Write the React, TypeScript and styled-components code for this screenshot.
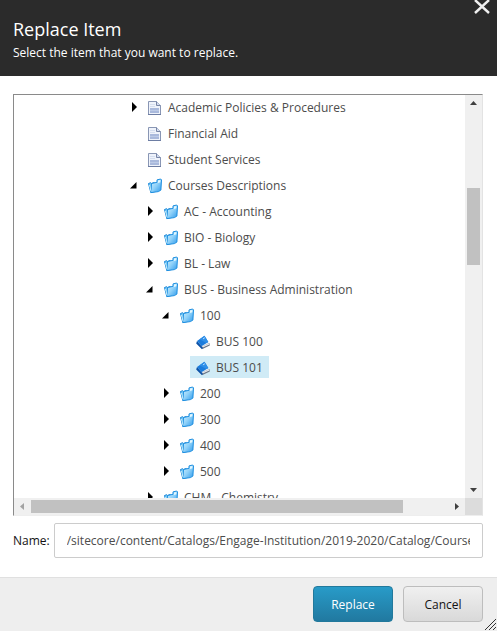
import React, { useState } from "react";
import styled, { createGlobalStyle } from "styled-components";

const GlobalStyle = createGlobalStyle`
  * { box-sizing: border-box; }
  body {
    margin: 0;
    background: #fff;
    font-family: "Open Sans", "Noto Sans", sans-serif;
    font-size: 12px;
    color: #131313;
  }
`;

const Dialog = styled.form`
  display: flex;
  flex-direction: column;
  height: 100vh;
  overflow: hidden;
`;

const Header = styled.header`
  display: flex;
  justify-content: space-between;
  align-items: flex-start;
  flex: none;
  height: 76px;
  padding: 0 7px 0 13px;
  background: #2b2b2b;
  color: #fff;
`;

const Title = styled.h1`
  margin: 16px 0 0;
  font-size: 18px;
  line-height: 26px;
  font-weight: 400;
`;

const Subtitle = styled.p`
  margin: 0;
  line-height: 22px;
`;

const CloseButton = styled.button`
  display: flex;
  padding: 0;
  border: 0;
  background: none;
  color: #f0f0f0;
  cursor: pointer;
`;

const Body = styled.main`
  display: flex;
  flex-direction: column;
  flex: 1;
  min-height: 0;
  padding: 18px 14px 19px 13px;
  gap: 7px;
`;

const TreeFrame = styled.div`
  display: grid;
  grid-template-columns: minmax(0, 1fr) 17px;
  grid-template-rows: minmax(0, 1fr) 17px;
  flex: 1;
  min-height: 0;
  border: 1px solid;
  border-color: #8a8a8a #e3e3e3 #eeeeee #8a8a8a;
`;

const TreeView = styled.ul`
  margin: 0;
  padding: 0;
  list-style: none;
  overflow: hidden;
`;

const TreeRow = styled.li<{ $level: number }>`
  display: flex;
  align-items: center;
  height: 26px;
  padding: 0 0 2px ${(p) => 115 + p.$level * 16}px;
`;

const Expander = styled.button`
  display: flex;
  flex: none;
  width: 13px;
  padding: 0 0 0 1px;
  border: 0;
  background: none;
`;

const Node = styled.button<{ $selected: boolean }>`
  display: flex;
  align-items: center;
  gap: 6px;
  height: 22px;
  padding: 1px 6px 0;
  border: 0;
  background: ${(p) => (p.$selected ? "#d0ebf6" : "transparent")};
  color: #4c4c4c;
  font: inherit;
  line-height: 22px;
  white-space: nowrap;
`;

const ScrollBar = styled.div<{ $vertical?: boolean }>`
  display: flex;
  flex-direction: ${(p) => (p.$vertical ? "column" : "row")};
  background: #f0f0f0;
`;

const ScrollArrow = styled.button`
  display: flex;
  align-items: center;
  justify-content: center;
  flex: none;
  width: 17px;
  height: 17px;
  padding: 0;
  border: 0;
  background: none;
`;

const Track = styled.div<{ $share: number }>`
  flex: ${(p) => p.$share} 1 0;
`;

const Thumb = styled(Track)<{ $vertical?: boolean }>`
  margin: ${(p) => (p.$vertical ? "0 2px" : "2px 0")};
  background: #c1c1c1;
`;

const Corner = styled.div`
  background: #dcdcdc;
`;

const Field = styled.div`
  display: flex;
  align-items: center;
  gap: 4px;
`;

const Label = styled.label`
  flex: none;
`;

const TextInput = styled.input`
  flex: 1;
  min-width: 0;
  height: 35px;
  padding: 0 12px;
  border: 1px solid #ccc;
  border-radius: 2px;
  background: #fff;
  color: #4c4c4c;
  font: inherit;
  outline: none;
`;

const Footer = styled.footer`
  position: relative;
  display: flex;
  justify-content: flex-end;
  gap: 10px;
  flex: none;
  padding: 8px 14px 9px;
  border-top: 1px solid #e0e0e0;
  background: #eee;
`;

const ActionButton = styled.button<{ $primary?: boolean }>`
  width: 80px;
  height: 36px;
  padding: 0;
  border: 1px solid ${(p) => (p.$primary ? "#22799c" : "#bdbdbd")};
  border-radius: 4px;
  background: ${(p) =>
    p.$primary
      ? "linear-gradient(#289bc8, #2179a0)"
      : "linear-gradient(#f0f0f0, #d9d9d9)"};
  color: ${(p) => (p.$primary ? "#fff" : "#131313")};
  font: inherit;
`;

const Grip = styled.svg`
  position: absolute;
  right: 1px;
  bottom: 0;
`;

type Kind = "page" | "folder" | "book";
type State = "open" | "closed" | "leaf";

function KindIcon({ kind }: { kind: Kind }) {
  if (kind === "page") {
    return (
      <svg width="14" height="16" viewBox="0 0 14 16" aria-hidden="true">
        <path d="M.5 1.500h8l4 4v9H.5z" fill="#eff3fb" stroke="#8996b4" />
        <path d="M8.500 1.500v4h4" fill="#d3dcee" stroke="#7785a6" />
        <path d="M2 8h9v5H2z" fill="#a9b9dc" />
        <path d="M2 4.500h5M2 6.500h5" stroke="#d5deef" />
        <path d="M2 10.500h9" stroke="#bccae6" />
        <path d="M0 14.500h13" stroke="#6d7da3" />
      </svg>
    );
  }
  if (kind === "folder") {
    return (
      <svg width="14" height="16" viewBox="0 0 14 16" aria-hidden="true">
        <defs>
          <linearGradient id="folder" x1="0" y1="0" x2="1" y2="1">
            <stop offset="0" stopColor="#d8f4ff" />
            <stop offset=".5" stopColor="#8dd0f9" />
            <stop offset="1" stopColor="#2b98ea" />
          </linearGradient>
        </defs>
        <path d="M.5 5.500l2.200-.8.600.8 3-1 1 9-4.500 1z" fill="#7ccdf8" stroke="#1685d8" />
        <path d="M3.500 5.500l5.500-1.200V1.900l3.700-.9.800.9-.6 10.200-2.500 1.500-7.500 1z" fill="url(#folder)" stroke="#1e8fe0" />
        <path d="M10 2.600l2.400-.5v2.200l-2.400.6z" fill="#e2f7ff" />
        <path d="M1.500 7l1.600 6.500" stroke="#c8effe" />
      </svg>
    );
  }
  return (
    <svg width="14" height="16" viewBox="0 0 14 16" aria-hidden="true">
      <path d="M2 10.500l4.500 4.500 7.300-3.400-.5-2.600z" fill="#6b7686" />
      <path d="M2.500 10l4.200 3.600 6.500-3.200-.8-1.700z" fill="#f2f4f7" />
      <path d="M4.800 13.200l7.800-3.700" stroke="#aab2be" strokeWidth=".6" />
      <path d="M1 7l7.500-5.200L12.300 8 5.500 12.300z" fill="#1c7cdc" />
      <path d="M3.500 5.300l5-3.500L12.300 8l-1.700 1z" fill="#2f8fe8" />
      <path d="M1 7L.2 9.500 6 15.200l.8-1.500-1.300-1.400z" fill="#0c52a8" />
      <path d="M7 4.900l1.900-1.200" stroke="#b4dcff" />
    </svg>
  );
}

function ExpanderIcon({ open }: { open: boolean }) {
  return (
    <svg width="9" height="10" viewBox="0 0 9 10" aria-hidden="true">
      <path d={open ? "M6.500 2v6.500H0z" : "M2 0l5 5-5 5z"} fill="#000" />
    </svg>
  );
}

const arrowPaths = {
  up: "M1 6l3.500-4L8 6z",
  down: "M1 3l3.500 4L8 3z",
  left: "M6 1L2 4.500 6 8z",
  right: "M3 1l4 3.500L3 8z",
};

function Arrow({ dir, faded }: { dir: keyof typeof arrowPaths; faded?: boolean }) {
  return (
    <ScrollArrow type="button" aria-label={`Scroll ${dir}`}>
      <svg width="9" height="9" viewBox="0 0 9 9" aria-hidden="true">
        <path d={arrowPaths[dir]} fill={faded ? "#a3a3a3" : "#404040"} />
      </svg>
    </ScrollArrow>
  );
}

const items: { text: string; level: number; kind: Kind; state: State }[] = [
  { text: "Academic Policies & Procedures", level: 0, kind: "page", state: "closed" },
  { text: "Financial Aid", level: 0, kind: "page", state: "leaf" },
  { text: "Student Services", level: 0, kind: "page", state: "leaf" },
  { text: "Courses Descriptions", level: 0, kind: "folder", state: "open" },
  { text: "AC - Accounting", level: 1, kind: "folder", state: "closed" },
  { text: "BIO - Biology", level: 1, kind: "folder", state: "closed" },
  { text: "BL - Law", level: 1, kind: "folder", state: "closed" },
  { text: "BUS - Business Administration", level: 1, kind: "folder", state: "open" },
  { text: "100", level: 2, kind: "folder", state: "open" },
  { text: "BUS 100", level: 3, kind: "book", state: "leaf" },
  { text: "BUS 101", level: 3, kind: "book", state: "leaf" },
  { text: "200", level: 2, kind: "folder", state: "closed" },
  { text: "300", level: 2, kind: "folder", state: "closed" },
  { text: "400", level: 2, kind: "folder", state: "closed" },
  { text: "500", level: 2, kind: "folder", state: "closed" },
  { text: "CHM - Chemistry", level: 1, kind: "folder", state: "closed" },
];

export default function App() {
  const [selected, setSelected] = useState("BUS 101");
  const [name, setName] = useState(
    "/sitecore/content/Catalogs/Engage-Institution/2019-2020/Catalog/Courses Descriptions"
  );

  return (
    <>
      <GlobalStyle />
      <Dialog onSubmit={(e) => e.preventDefault()}>
        <Header>
          <div>
            <Title>Replace Item</Title>
            <Subtitle>Select the item that you want to replace.</Subtitle>
          </div>
          <CloseButton type="button" aria-label="Close">
            <svg width="16" height="14" viewBox="0 0 16 14" aria-hidden="true">
              <path d="M1 0l14 13M15 0L1 13" stroke="currentColor" strokeWidth="2.400" />
            </svg>
          </CloseButton>
        </Header>
        <Body>
          <TreeFrame>
            <TreeView role="tree">
              {items.map((item) => (
                <TreeRow
                  key={item.text}
                  $level={item.level}
                  role="treeitem"
                  aria-level={item.level + 1}
                  aria-selected={selected === item.text}
                >
                  <Expander
                    type="button"
                    aria-label={`Toggle ${item.text}`}
                    disabled={item.state === "leaf"}
                  >
                    {item.state !== "leaf" && <ExpanderIcon open={item.state === "open"} />}
                  </Expander>
                  <Node
                    type="button"
                    $selected={selected === item.text}
                    onClick={() => setSelected(item.text)}
                  >
                    <KindIcon kind={item.kind} />
                    {item.text}
                  </Node>
                </TreeRow>
              ))}
            </TreeView>
            <ScrollBar $vertical>
              <Arrow dir="up" />
              <Track $share={76} />
              <Thumb $share={77} $vertical />
              <Track $share={216} />
              <Arrow dir="down" />
            </ScrollBar>
            <ScrollBar>
              <Arrow dir="left" faded />
              <Thumb $share={372} />
              <Track $share={45} />
              <Arrow dir="right" />
            </ScrollBar>
            <Corner />
          </TreeFrame>
          <Field>
            <Label htmlFor="item-name">Name:</Label>
            <TextInput
              id="item-name"
              type="text"
              value={name}
              onChange={(e) => setName(e.target.value)}
            />
          </Field>
        </Body>
        <Footer>
          <ActionButton type="submit" $primary>
            Replace
          </ActionButton>
          <ActionButton type="button">Cancel</ActionButton>
          <Grip width="12" height="13" viewBox="0 0 12 13" aria-hidden="true">
            <path d="M1 12L12 1M5 12l7-7M9 12l3-3" stroke="#333" strokeWidth="1" />
          </Grip>
        </Footer>
      </Dialog>
    </>
  );
}
